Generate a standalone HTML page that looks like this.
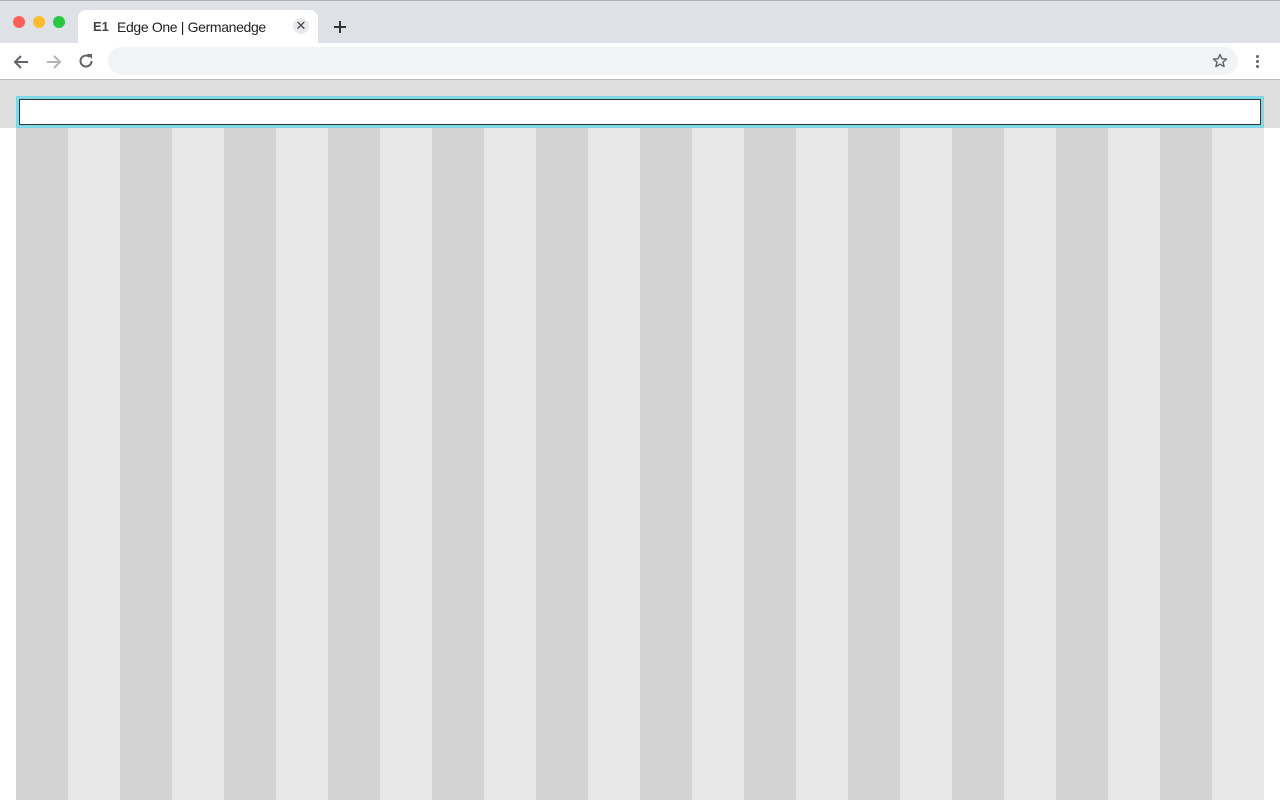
<!DOCTYPE html>
<html><head><style>
body{margin:0;width:1280px;height:800px;overflow:hidden;background:#fff;font-family:"Liberation Sans",sans-serif;position:relative}
.tb{position:absolute;left:0;top:0;width:1280px;height:43px;background:#dee1e6;border-top:1px solid #b0b0b0;box-sizing:border-box}
.dot{position:absolute;top:15px;width:12px;height:12px;border-radius:50%}
.tab{position:absolute;left:78px;top:9px;width:240px;height:34px;background:#fff;border-radius:8px 8px 0 0}
.nav{position:absolute;left:0;top:43px;width:1280px;height:37px;background:#fff;border-bottom:1px solid #bbb;box-sizing:border-box}
.omni{position:absolute;left:108px;top:4px;width:1130px;height:28px;border-radius:14px;background:#f1f3f4}
.band{position:absolute;left:0;top:80px;width:1280px;height:48px;background:#e0dfe0}
.inp{position:absolute;left:16px;top:96px;width:1248px;height:32px;box-sizing:border-box;border:3px solid #80d8e6;background:#fff}
.inp div{position:absolute;inset:0;border:1px solid #333}
.stripes{position:absolute;left:16px;top:128px;width:1248px;height:672px;background:repeating-linear-gradient(90deg,#d4d3d4 0 52px,#e7e7e7 52px 104px)}
</style></head><body>
<div class="tb">
<div class="dot" style="left:13px;background:#fe5f57"></div>
<div class="dot" style="left:33px;background:#febc2e"></div>
<div class="dot" style="left:53px;background:#28c840"></div>
<div class="tab">
<span style="position:absolute;left:15px;top:9px;font-size:13px;font-weight:bold;color:#444">E1</span>
<span style="position:absolute;left:39px;top:9px;font-size:14px;color:#222;letter-spacing:-0.35px">Edge One | Germanedge</span>
<div style="position:absolute;left:215px;top:8px;width:16px;height:16px;border-radius:50%;background:#e8eaed;text-align:center;font-size:13px;line-height:16px;color:#444">✕</div>
</div>
<svg style="position:absolute;left:333px;top:19px" width="14" height="14" viewBox="0 0 14 14"><path d="M7 1v12M1 7h12" stroke="#333" stroke-width="2"/></svg>
</div>
<div class="nav">
<svg style="position:absolute;left:12px;top:10px" width="18" height="18" viewBox="0 0 18 18"><path d="M16 9H3M9 3L3 9l6 6" stroke="#5f6368" stroke-width="2" fill="none"/></svg>
<svg style="position:absolute;left:45px;top:10px" width="18" height="18" viewBox="0 0 18 18"><path d="M2 9h13M9 3l6 6-6 6" stroke="#b5b5b5" stroke-width="2" fill="none"/></svg>
<svg style="position:absolute;left:77px;top:9px" width="18" height="18" viewBox="0 0 18 18"><path d="M14.5 9A5.5 5.5 0 1 1 12.5 4.8" stroke="#5f6368" stroke-width="2" fill="none"/><path d="M10 2h5v5z" fill="#5f6368"/></svg>
<div class="omni"><svg style="position:absolute;right:10px;top:6px" width="16" height="16" viewBox="0 0 16 16"><path d="M8 1.5l1.9 4.2 4.6.4-3.5 3 1.1 4.5L8 11.2 3.9 13.6 5 9.1 1.5 6.1l4.6-.4z" stroke="#5f6368" stroke-width="1.4" fill="none" stroke-linejoin="round"/></svg></div>
<div style="position:absolute;left:1256px;top:12px;width:3px;height:3px;background:#5f6368;border-radius:50%;box-shadow:0 5px #5f6368,0 10px #5f6368"></div>
</div>
<div class="band"></div>
<div class="inp"><div></div></div>
<div class="stripes"></div>
</body></html>
